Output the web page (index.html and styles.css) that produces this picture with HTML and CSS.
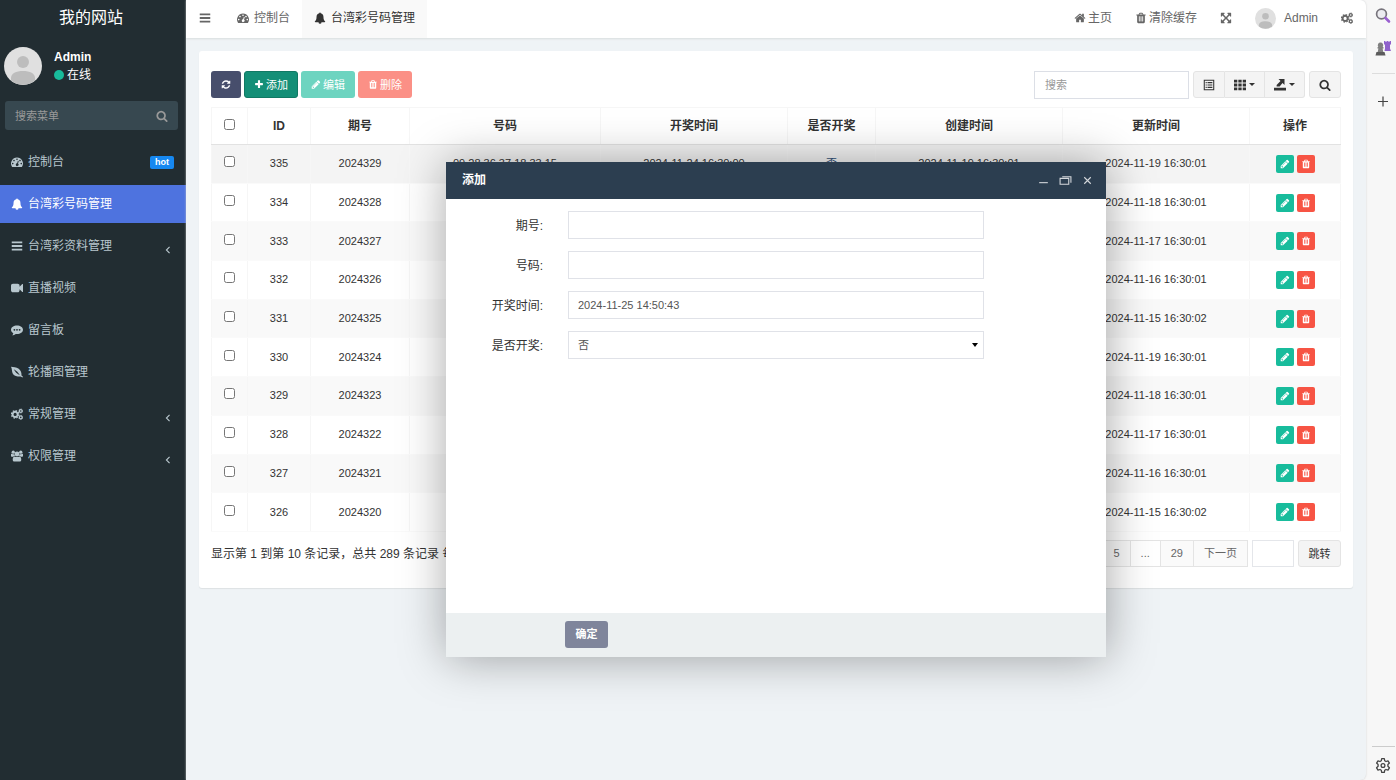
FILE: index.html
```html
<!DOCTYPE html>
<html lang="zh-CN">
<head>
  <meta charset="UTF-8">
  <meta name="viewport" content="width=device-width, initial-scale=1.0">
  <title>台湾彩号码管理</title>
  <link rel="stylesheet" href="styles.css">
</head>
<body>
<!-- icons -->
<svg class="sprite" aria-hidden="true">
  <symbol id="i-bars" viewBox="0 0 16 16"><path d="M1 2h14v2.400H1zM1 6.800h14v2.400H1zM1 11.600h14V14H1z"/></symbol>
  <symbol id="i-search" viewBox="0 0 1792 1792"><path d="M1216 832q0-185-131.500-316.500t-316.500-131.500-316.500 131.500-131.500 316.500 131.500 316.500 316.500 131.500 316.500-131.500 131.500-316.500zm512 832q0 52-38 90t-90 38q-54 0-90-38l-343-342q-179 124-399 124-143 0-273.500-55.500t-225-150-150-225-55.500-273.500 55.500-273.500 150-225 225-150 273.500-55.500 273.500 55.500 225 150 150 225 55.500 273.500q0 220-124 399l343 343q37 37 37 90z"/></symbol>
  <symbol id="i-plus" viewBox="0 0 1792 1792"><path d="M1600 736v192q0 40-28 68t-68 28h-416v416q0 40-28 68t-68 28h-192q-40 0-68-28t-28-68v-416h-416q-40 0-68-28t-28-68v-192q0-40 28-68t68-28h416v-416q0-40 28-68t68-28h192q40 0 68 28t28 68v416h416q40 0 68 28t28 68z"/></symbol>
  <symbol id="i-pencil" viewBox="0 0 1792 1792"><path d="M491 1536l91-91-235-235-91 91v107h128v128h107zm523-928q0-22-22-22-10 0-17 7l-542 542q-7 7-7 17 0 22 22 22 10 0 17-7l542-542q7-7 7-17zm-54-192l416 416-832 832h-416v-416zm683 96q0 53-37 90l-166 166-416-416 166-165q36-38 90-38 53 0 91 38l235 234q37 39 37 91z"/></symbol>
  <symbol id="i-trash" viewBox="0 0 1792 1792"><path d="M704 1376v-704q0-14-9-23t-23-9h-64q-14 0-23 9t-9 23v704q0 14 9 23t23 9h64q14 0 23-9t9-23zm256 0v-704q0-14-9-23t-23-9h-64q-14 0-23 9t-9 23v704q0 14 9 23t23 9h64q14 0 23-9t9-23zm256 0v-704q0-14-9-23t-23-9h-64q-14 0-23 9t-9 23v704q0 14 9 23t23 9h64q14 0 23-9t9-23zm-544-992h448l-48-117q-7-9-17-11h-317q-10 2-17 11zm928 32v64q0 14-9 23t-23 9h-96v948q0 83-47 143.500t-113 60.500h-832q-66 0-113-58.500t-47-141.500v-952h-96q-14 0-23-9t-9-23v-64q0-14 9-23t23-9h309l70-167q15-37 54-63t79-26h320q40 0 79 26t54 63l70 167h309q14 0 23 9t9 23z"/></symbol>
  <symbol id="i-refresh" viewBox="0 0 1792 1792"><path d="M1639 1056q0 5-1 7-64 268-268 434.500t-478 166.500q-146 0-282.500-55t-243.500-157l-129 129q-19 19-45 19t-45-19-19-45v-448q0-26 19-45t45-19h448q26 0 45 19t19 45-19 45l-137 137q71 66 161 102t187 36q134 0 250-65t186-179q11-17 53-117 8-23 30-23h192q13 0 22.500 9.500t9.500 22.500zm25-800v448q0 26-19 45t-45 19h-448q-26 0-45-19t-19-45 19-45l138-138q-148-137-349-137-134 0-250 65t-186 179q-11 17-53 117-8 23-30 23h-199q-13 0-22.500-9.500t-9.500-22.500v-7q65-268 270-434.500t480-166.500q146 0 284 55.500t245 156.500l130-129q19-19 45-19t45 19 19 45z"/></symbol>
  <symbol id="i-home" viewBox="0 0 1792 1792"><path d="M1472 992v480q0 26-19 45t-45 19h-384v-384h-256v384h-384q-26 0-45-19t-19-45v-480q0-1 .5-3t.5-3l575-474 575 474q1 2 1 6zm223-69l-62 74q-8 9-21 11h-3q-13 0-21-7l-692-577-692 577q-12 8-24 7-13-2-21-11l-62-74q-8-10-7-23.500t11-21.500l719-599q32-26 76-26t76 26l244 204v-195q0-14 9-23t23-9h192q14 0 23 9t9 23v408l219 182q10 8 11 21.500t-7 23.500z"/></symbol>
  <symbol id="i-video" viewBox="0 0 1792 1792"><path d="M1792 352v1088q0 42-39 59-13 5-25 5-27 0-45-19l-403-403v166q0 119-84.500 203.500t-203.500 84.500h-704q-119 0-203.500-84.500t-84.500-203.500v-704q0-119 84.500-203.500t203.500-84.500h704q119 0 203.500 84.500t84.500 203.500v165l403-402q18-19 45-19 12 0 25 5 39 17 39 59z"/></symbol>
  <symbol id="i-expand" viewBox="0 0 1792 1792"><path d="M1411 541l-355 355 355 355 144-144q29-31 70-14 39 17 39 59v448q0 26-19 45t-45 19h-448q-42 0-59-40-17-39 14-69l144-144-355-355-355 355 144 144q31 30 14 69-17 40-59 40h-448q-26 0-45-19t-19-45v-448q0-42 40-59 39-17 69 14l144 144 355-355-355-355-144 144q-19 19-45 19-12 0-24-5-40-17-40-59v-448q0-26 19-45t45-19h448q42 0 59 40 17 39-14 69l-144 144 355 355 355-355-144-144q-31-30-14-69 17-40 59-40h448q26 0 45 19t19 45v448q0 42-39 59-13 5-25 5-26 0-45-19z"/></symbol>
  <symbol id="i-dash" viewBox="0 0 16 16"><path fill-rule="evenodd" d="M8 2a8 8 0 0 0-6.700 12.300q.3.500.8.500h11.800q.5 0 .8-.5A8 8 0 0 0 8 2zM2.300 9a1.100 1.100 0 1 0 0 2.200 1.100 1.100 0 0 0 0-2.200zM4 5a1.100 1.100 0 1 0 0 2.200A1.100 1.100 0 0 0 4 5zM8 3.200a1.100 1.100 0 1 0 0 2.200 1.100 1.100 0 0 0 0-2.200zM12 5a1.100 1.100 0 1 0 0 2.200A1.100 1.100 0 0 0 12 5zM13.700 9a1.100 1.100 0 1 0 0 2.200 1.100 1.100 0 0 0 0-2.200zM9.200 6.300l-1 3.500a1.800 1.800 0 1 0 1.200.4l.9-3.600z"/></symbol>
  <symbol id="i-bell" viewBox="0 0 16 16"><path d="M8 .5c.7 0 1 .5 1 1.200 2.300.5 3.600 2.300 3.600 4.600 0 3.500.9 5 2.400 6.200 0 .6-.4 1-1 1H10a2 2 0 0 1-4 0H2c-.6 0-1-.4-1-1 1.500-1.200 2.400-2.700 2.400-6.200C3.400 4 4.700 2.200 7 1.700 7 1 7.300.5 8 .5z"/></symbol>
  <symbol id="i-comment" viewBox="0 0 16 16"><path fill-rule="evenodd" d="M8 2c4.400 0 8 2.500 8 5.700s-3.600 5.700-8 5.700l-1.600-.1C5 14.500 3.200 15 1.500 15c.9-.8 1.500-1.600 1.600-2.800C1.200 11.100 0 9.500 0 7.700 0 4.500 3.600 2 8 2zM4.500 6.500a1.200 1.200 0 1 0 0 2.400 1.200 1.200 0 0 0 0-2.400zm3.500 0a1.200 1.200 0 1 0 0 2.400 1.200 1.200 0 0 0 0-2.400zm3.500 0a1.200 1.200 0 1 0 0 2.400 1.200 1.200 0 0 0 0-2.400z"/></symbol>
  <symbol id="i-leaf" viewBox="0 0 16 16"><path fill-rule="evenodd" d="M0 1c3 .6 7 .2 10.300 2.600 3 2.300 3.900 5.400 3.700 8.900l2 1.800-.7 1-2.600-1.400C8.500 14 4.600 13.500 2.600 10.500.9 7.800 1.700 4 0 1zm3.800 3.200C5.300 7.500 8 10.300 11.800 12.400 10 8.700 7.200 6.300 3.800 4.200z"/></symbol>
  <symbol id="i-cogs" viewBox="0 0 16 16"><g fill="none" stroke="currentColor"><circle cx="5.500" cy="8.500" r="3.400" stroke-width="2.600"/><circle cx="5.500" cy="8.500" r="4.900" stroke-width="1.800" stroke-dasharray="2.100 1.750"/><circle cx="13" cy="4" r="1.900" stroke-width="1.700"/><circle cx="13" cy="4" r="2.800" stroke-width=".9" stroke-dasharray="1.500 1.430"/><circle cx="13" cy="12.500" r="1.900" stroke-width="1.700"/><circle cx="13" cy="12.500" r="2.800" stroke-width=".9" stroke-dasharray="1.500 1.430"/></g></symbol>
  <symbol id="i-users" viewBox="0 0 16 16"><circle cx="3" cy="2.900" r="2.200"/><circle cx="13" cy="2.900" r="2.200"/><circle cx="8" cy="5.300" r="3.200"/><path d="M0 5.500c.5-.7 1-.5 1.800-.1.900.4 1.700.3 2.600 0C4.500 6.600 5 7.300 5.400 8 4 8 3.300 8.400 2.700 9H1.500C.5 9 0 8.400 0 7.500zM16 5.500c-.5-.7-1-.5-1.800-.1-.9.4-1.700.3-2.600 0-.1 1.200-.6 1.900-1 2.600 1.400 0 2.100.4 2.700 1h1.200c1 0 1.500-.6 1.500-1.500zM5 8.500c2 1.300 4 1.300 6 0 2 0 2.700 2 2.700 4.500 0 1.400-.8 2.400-2 2.400H4.300c-1.200 0-2-1-2-2.400C2.300 10.500 3 8.500 5 8.500z"/></symbol>
  <symbol id="i-angle" viewBox="0 0 16 16"><path d="M10.500 3L5.500 8l5 5" fill="none" stroke="currentColor" stroke-width="1.800"/></symbol>
  <symbol id="i-list" viewBox="0 0 16 16"><path d="M1.700 1.700h12.600v12.600H1.700z" fill="none" stroke="currentColor" stroke-width="1.400"/><path d="M3.500 4h1.500v1.500H3.500zM6 4h6.500v1.500H6zM3.500 7.200h1.500v1.500H3.500zM6 7.200h6.500v1.500H6zM3.500 10.400h1.500v1.500H3.500zM6 10.400h6.500v1.500H6z"/></symbol>
  <symbol id="i-grid" viewBox="0 0 16 16"><path d="M0 1h4.400v3.800H0zM5.800 1h4.400v3.800H5.800zM11.600 1H16v3.800h-4.400zM0 6.100h4.400v3.800H0zM5.800 6.100h4.400v3.800H5.800zM11.600 6.100H16v3.800h-4.400zM0 11.200h4.400V15H0zM5.800 11.200h4.400V15H5.800zM11.600 11.200H16V15h-4.400z"/></symbol>
  <symbol id="i-export" viewBox="0 0 16 16"><path d="M0 11.500h16v3.800H0zM6 0h8v8l-2.600-2.600L7.500 10H3.500v-2L8.700 2.700z"/></symbol>
  <symbol id="i-user" viewBox="0 0 38 38"><circle cx="19" cy="19" r="19" fill="#e0e0e0"/><circle cx="19" cy="15" r="6" fill="#bdbdbd"/><path d="M7 33.500V31c0-4.500 5-7 12-7s12 2.500 12 7v2.500a19 19 0 0 1-24 0z" fill="#bdbdbd"/></symbol>
</svg>

<aside class="sidebar">
  <div class="logo">我的网站</div>
  <div class="user-panel">
    <svg class="avatar"><use href="#i-user"/></svg>
    <div class="user-info">
      <strong>Admin</strong>
      <span class="status"><i class="dot"></i>在线</span>
    </div>
  </div>
  <form class="menu-search">
    <input type="text" placeholder="搜索菜单" aria-label="搜索菜单">
    <button type="button" aria-label="搜索"><svg class="icon"><use href="#i-search"/></svg></button>
  </form>
  <nav class="menu">
    <a href="#"><svg class="icon"><use href="#i-dash"/></svg>控制台<span class="badge">hot</span></a>
    <a href="#" class="active"><svg class="icon"><use href="#i-bell"/></svg>台湾彩号码管理</a>
    <a href="#"><svg class="icon"><use href="#i-bars"/></svg>台湾彩资料管理<svg class="arrow"><use href="#i-angle"/></svg></a>
    <a href="#"><svg class="icon"><use href="#i-video"/></svg>直播视频</a>
    <a href="#"><svg class="icon"><use href="#i-comment"/></svg>留言板</a>
    <a href="#"><svg class="icon"><use href="#i-leaf"/></svg>轮播图管理</a>
    <a href="#"><svg class="icon"><use href="#i-cogs"/></svg>常规管理<svg class="arrow"><use href="#i-angle"/></svg></a>
    <a href="#"><svg class="icon"><use href="#i-users"/></svg>权限管理<svg class="arrow"><use href="#i-angle"/></svg></a>
  </nav>
</aside>

<div class="main">
  <header class="navbar">
    <a href="#" class="toggle" aria-label="菜单"><svg class="icon"><use href="#i-bars"/></svg></a>
    <a href="#" class="tab"><svg class="icon"><use href="#i-dash"/></svg>控制台</a>
    <a href="#" class="tab current"><svg class="icon"><use href="#i-bell"/></svg>台湾彩号码管理</a>
    <div class="nav-right">
      <a href="#"><svg class="icon"><use href="#i-home"/></svg>主页</a>
      <a href="#"><svg class="icon"><use href="#i-trash"/></svg>清除缓存</a>
      <a href="#" aria-label="全屏"><svg class="icon"><use href="#i-expand"/></svg></a>
      <a href="#" class="account"><svg class="avatar-sm"><use href="#i-user"/></svg>Admin</a>
      <a href="#" aria-label="设置"><svg class="icon"><use href="#i-cogs"/></svg></a>
    </div>
  </header>

  <div class="content">
    <section class="panel">
      <div class="toolbar">
        <button type="button" class="btn btn-primary" aria-label="刷新"><svg class="icon"><use href="#i-refresh"/></svg></button>
        <button type="button" class="btn btn-add"><svg class="icon"><use href="#i-plus"/></svg>添加</button>
        <button type="button" class="btn btn-edit"><svg class="icon"><use href="#i-pencil"/></svg>编辑</button>
        <button type="button" class="btn btn-del"><svg class="icon"><use href="#i-trash"/></svg>删除</button>
        <div class="tools">
          <input type="text" class="search" placeholder="搜索" aria-label="搜索">
          <div class="btn-group">
            <button type="button" class="btn btn-default" aria-label="切换"><svg class="icon"><use href="#i-list"/></svg></button>
            <button type="button" class="btn btn-default wide" aria-label="列"><svg class="icon"><use href="#i-grid"/></svg><i class="caret"></i></button>
            <button type="button" class="btn btn-default wide" aria-label="导出"><svg class="icon"><use href="#i-export"/></svg><i class="caret"></i></button>
          </div>
          <button type="button" class="btn btn-default" aria-label="普通搜索"><svg class="icon"><use href="#i-search"/></svg></button>
        </div>
      </div>

      <table class="table">
        <colgroup>
          <col class="c-check"><col class="c-id"><col class="c-no"><col class="c-code"><col class="c-time"><col class="c-open"><col class="c-time"><col class="c-time"><col class="c-op">
        </colgroup>
        <thead>
          <tr><th><input type="checkbox" aria-label="全选"></th><th>ID</th><th>期号</th><th>号码</th><th>开奖时间</th><th>是否开奖</th><th>创建时间</th><th>更新时间</th><th>操作</th></tr>
        </thead>
        <tbody>
          <tr class="hover"><td><input type="checkbox" aria-label="335"></td><td>335</td><td>2024329</td><td>09,28,36,37,18,33,15</td><td>2024-11-24 16:30:00</td><td><a href="#">否</a></td><td>2024-11-19 16:30:01</td><td>2024-11-19 16:30:01</td><td class="ops"><button type="button" class="op edit" aria-label="编辑"><svg class="icon"><use href="#i-pencil"/></svg></button><button type="button" class="op del" aria-label="删除"><svg class="icon"><use href="#i-trash"/></svg></button></td></tr>
          <tr><td><input type="checkbox" aria-label="334"></td><td>334</td><td>2024328</td><td></td><td></td><td></td><td></td><td>2024-11-18 16:30:01</td><td class="ops"><button type="button" class="op edit" aria-label="编辑"><svg class="icon"><use href="#i-pencil"/></svg></button><button type="button" class="op del" aria-label="删除"><svg class="icon"><use href="#i-trash"/></svg></button></td></tr>
          <tr><td><input type="checkbox" aria-label="333"></td><td>333</td><td>2024327</td><td></td><td></td><td></td><td></td><td>2024-11-17 16:30:01</td><td class="ops"><button type="button" class="op edit" aria-label="编辑"><svg class="icon"><use href="#i-pencil"/></svg></button><button type="button" class="op del" aria-label="删除"><svg class="icon"><use href="#i-trash"/></svg></button></td></tr>
          <tr><td><input type="checkbox" aria-label="332"></td><td>332</td><td>2024326</td><td></td><td></td><td></td><td></td><td>2024-11-16 16:30:01</td><td class="ops"><button type="button" class="op edit" aria-label="编辑"><svg class="icon"><use href="#i-pencil"/></svg></button><button type="button" class="op del" aria-label="删除"><svg class="icon"><use href="#i-trash"/></svg></button></td></tr>
          <tr><td><input type="checkbox" aria-label="331"></td><td>331</td><td>2024325</td><td></td><td></td><td></td><td></td><td>2024-11-15 16:30:02</td><td class="ops"><button type="button" class="op edit" aria-label="编辑"><svg class="icon"><use href="#i-pencil"/></svg></button><button type="button" class="op del" aria-label="删除"><svg class="icon"><use href="#i-trash"/></svg></button></td></tr>
          <tr><td><input type="checkbox" aria-label="330"></td><td>330</td><td>2024324</td><td></td><td></td><td></td><td></td><td>2024-11-19 16:30:01</td><td class="ops"><button type="button" class="op edit" aria-label="编辑"><svg class="icon"><use href="#i-pencil"/></svg></button><button type="button" class="op del" aria-label="删除"><svg class="icon"><use href="#i-trash"/></svg></button></td></tr>
          <tr><td><input type="checkbox" aria-label="329"></td><td>329</td><td>2024323</td><td></td><td></td><td></td><td></td><td>2024-11-18 16:30:01</td><td class="ops"><button type="button" class="op edit" aria-label="编辑"><svg class="icon"><use href="#i-pencil"/></svg></button><button type="button" class="op del" aria-label="删除"><svg class="icon"><use href="#i-trash"/></svg></button></td></tr>
          <tr><td><input type="checkbox" aria-label="328"></td><td>328</td><td>2024322</td><td></td><td></td><td></td><td></td><td>2024-11-17 16:30:01</td><td class="ops"><button type="button" class="op edit" aria-label="编辑"><svg class="icon"><use href="#i-pencil"/></svg></button><button type="button" class="op del" aria-label="删除"><svg class="icon"><use href="#i-trash"/></svg></button></td></tr>
          <tr><td><input type="checkbox" aria-label="327"></td><td>327</td><td>2024321</td><td></td><td></td><td></td><td></td><td>2024-11-16 16:30:01</td><td class="ops"><button type="button" class="op edit" aria-label="编辑"><svg class="icon"><use href="#i-pencil"/></svg></button><button type="button" class="op del" aria-label="删除"><svg class="icon"><use href="#i-trash"/></svg></button></td></tr>
          <tr><td><input type="checkbox" aria-label="326"></td><td>326</td><td>2024320</td><td></td><td></td><td></td><td></td><td>2024-11-15 16:30:02</td><td class="ops"><button type="button" class="op edit" aria-label="编辑"><svg class="icon"><use href="#i-pencil"/></svg></button><button type="button" class="op del" aria-label="删除"><svg class="icon"><use href="#i-trash"/></svg></button></td></tr>
        </tbody>
      </table>

      <div class="table-foot">
        <span class="summary">显示第 1 到第 10 条记录，总共 289 条记录 每</span>
        <div class="pages">
          <a href="#">5</a><span>...</span><a href="#">29</a><a href="#">下一页</a>
        </div>
        <input type="text" class="jump" aria-label="页码">
        <button type="button" class="btn btn-default btn-jump">跳转</button>
      </div>
    </section>

    <!-- add dialog -->
    <div class="dialog-wrap">
      <div class="dialog" role="dialog" aria-labelledby="dialog-title">
        <div class="dialog-head">
          <span id="dialog-title">添加</span>
          <div class="win-btns">
            <button type="button" aria-label="最小化"><svg viewBox="0 0 12 12"><path d="M2 8h8"/></svg></button>
            <button type="button" aria-label="最大化"><svg viewBox="0 0 12 12"><path d="M1 4h8v5.500H1zM3 2.500h8v5.500"/></svg></button>
            <button type="button" aria-label="关闭"><svg viewBox="0 0 12 12"><path d="M3 3l6 6M9 3l-6 6"/></svg></button>
          </div>
        </div>
        <form class="dialog-body">
          <label for="issue">期号:</label><input type="text" id="issue">
          <label for="code">号码:</label><input type="text" id="code">
          <label for="opentime">开奖时间:</label><input type="text" id="opentime" value="2024-11-25 14:50:43">
          <label for="isopen">是否开奖:</label>
          <div class="select">
            <select id="isopen"><option>否</option><option>是</option></select>
            <i class="caret"></i>
          </div>
        </form>
        <div class="dialog-foot">
          <button type="button" class="btn btn-ok">确定</button>
        </div>
      </div>
    </div>
  </div>
</div>

<aside class="rail">
  <button type="button" aria-label="搜索"><svg viewBox="0 0 16 16"><circle cx="6.500" cy="6.500" r="4.900" fill="#ececf0" stroke="#77747c" stroke-width="1.700"/><path d="M10.500 10.500l3.500 3.500" stroke="#9a5fd0" stroke-width="2.600" stroke-linecap="round"/></svg></button>
  <button type="button" aria-label="游戏"><svg viewBox="0 0 16 16"><path fill="#8f62cc" d="M9 .5h1.500v1h1v-1h2v1h1v-1H16v3l-1 1v3.500l1 2.500H9.500L10 8V4.500l-1-1z"/><path fill="#808080" d="M5.500 2a2.700 2.700 0 0 1 2.200 4.300l.8.400v1.300H7.600l.8 4h-5.800l.8-4H2.500V6.700l.8-.4A2.700 2.700 0 0 1 5.500 2z"/><path fill="#5c5c5c" d="M1.500 11.500h8L10.500 15H.5z"/></svg></button>
  <hr>
  <button type="button" class="rail-add" aria-label="添加"><svg viewBox="0 0 16 16"><path d="M8 3v10M3 8h10" stroke="#444" stroke-width="1.200"/></svg></button>
  <hr class="last">
  <button type="button" aria-label="设置"><svg viewBox="0 0 16 16" fill="none" stroke="#444" stroke-width="1.300" stroke-linejoin="round"><path d="M6.700 1.200h2.600l.4 2 1.300.8 2-.7 1.400 2.300L12.900 7v1.800l1.500 1.500-1.400 2.300-2-.6-1.300.8-.4 2H6.700l-.4-2-1.300-.8-2 .6-1.400-2.300L3.100 8.800V7L1.600 5.600 3 3.300l2 .7 1.300-.8z"/><circle cx="8" cy="8" r="1.900"/></svg></button>
</aside>
</body>
</html>
```
FILE: styles.css
```css
*{
  box-sizing: border-box;
}
body{
  margin: 0;
  min-height: 100vh;
  display: flex;
  background-color: #f7f7f7;
  color: #333;
  font: 12px/18px "Liberation Sans", "Noto Sans CJK SC", sans-serif;
}
a{
  color: inherit;
  text-decoration: none;
}
button, input, select{
  font: inherit;
  color: inherit;
  margin: 0;
}
button{
  padding: 0;
  border: 0;
  background: none;
}
.sprite{
  position: absolute;
  width: 0;
  height: 0;
}
.icon{
  width: 12px;
  height: 12px;
  fill: currentColor;
  flex: none;
}
.caret{
  border: 3px solid transparent;
  border-top-color: currentColor;
  border-bottom: 0;
}

/* sidebar */
.sidebar{
  width: 186px;
  flex: none;
  background-color: #222d32;
  color: #b8c7ce;
}
.logo{
  height: 38px;
  padding-right: 4px;
  line-height: 35px;
  font-size: 16px;
  text-align: center;
  color: #fff;
}
.user-panel{
  display: flex;
  align-items: center;
  gap: 12px;
  height: 56px;
  padding-left: 4px;
  color: #fff;
}
.avatar{
  width: 38px;
  height: 38px;
}
.user-info{
  display: flex;
  flex-direction: column;
}
.status{
  display: flex;
  align-items: center;
  gap: 3px;
}
.dot{
  width: 10px;
  height: 10px;
  border-radius: 50%;
  background-color: #18bc9c;
}
.menu-search{
  display: flex;
  align-items: center;
  height: 29px;
  margin: 7px 8px 13px 5px;
  padding: 0 10px;
  border-radius: 3px;
  background-color: #374850;
  font-size: 11px;
}
.menu-search input{
  flex: 1;
  min-width: 0;
  padding: 0;
  border: 0;
  background: none;
  outline: 0;
}
.menu-search input::placeholder{
  color: #999;
}
.menu-search button{
  display: flex;
  color: #999;
}
.menu{
  display: flex;
  flex-direction: column;
  gap: 4px;
}
.menu a{
  display: flex;
  align-items: center;
  gap: 5px;
  height: 38px;
  padding: 0 12px 0 11px;
}
.menu a.active{
  background-color: #4e73df;
  color: #fff;
}
.badge{
  margin-left: auto;
  padding: 0 5px;
  border-radius: 2px;
  background-color: #1688f1;
  color: #fff;
  font-size: 9px;
  font-weight: bold;
  line-height: 13px;
}
.arrow{
  width: 10px;
  height: 10px;
  margin: 8px 1px 0 auto;
}

/* main */
.main{
  flex: 1;
  min-width: 0;
  display: flex;
  flex-direction: column;
  border-radius: 0 6px 6px 0;
  overflow: hidden;
  background-color: #eff3f6;
  box-shadow: 0 0 2px #ccc;
}
.navbar{
  display: flex;
  height: 38px;
  padding: 0 13px;
  background-color: #fff;
  color: #666;
  box-shadow: 0 1px 2px #d8dede;
  z-index: 1;
}
.navbar a{
  display: flex;
  align-items: center;
  gap: 5px;
  padding-bottom: 2px;
}
.navbar .toggle{
  padding-right: 14px;
}
.navbar .tab{
  padding: 0 12px 2px;
}
.navbar .current{
  background-color: #f9f9f9;
  color: #333;
}
.nav-right{
  display: flex;
  gap: 23px;
  margin-left: auto;
}
.navbar .nav-right a{
  gap: 2px;
}
.navbar .nav-right .account{
  gap: 8px;
}
.avatar-sm{
  width: 21px;
  height: 21px;
}
.content{
  position: relative;
  flex: 1;
  padding: 13px;
}
.panel{
  padding: 20px 12px 21px;
  border-radius: 3px;
  background-color: #fff;
  box-shadow: 0 1px 1px #dde1e4;
}
.toolbar{
  display: flex;
  gap: 3px;
  margin-bottom: 8px;
}
.btn{
  display: flex;
  align-items: center;
  justify-content: center;
  gap: 2px;
  height: 27px;
  padding: 0 10px;
  border-radius: 3px;
  color: #fff;
  font-size: 11px;
  white-space: nowrap;
}
.toolbar > .btn .icon{
  width: 10px;
  height: 11px;
}
.btn-primary{
  background-color: #474e6c;
}
.btn-add{
  padding: 0 9px;
  background-color: #148f77;
  border: 1px solid #117964;
}
.btn-edit{
  background-color: #6dd4c0;
}
.btn-del{
  background-color: #fb9086;
}
.btn-default{
  width: 32px;
  padding: 0;
  border: 1px solid #e4e4e4;
  background-color: #f4f4f4;
  color: #333;
}
.tools{
  display: flex;
  gap: 4px;
  margin-left: auto;
}
.search{
  width: 155px;
  height: 28px;
  padding: 0 10px;
  border: 1px solid #dcdfe6;
  font-size: 11px;
}
.search::placeholder{
  color: #999;
}
.btn-group{
  display: flex;
}
.btn-group .btn{
  border-radius: 0;
}
.btn-group .btn + .btn{
  border-left: 0;
}
.btn-group .btn:first-child{
  border-radius: 3px 0 0 3px;
}
.btn-group .btn:last-child{
  border-radius: 0 3px 3px 0;
}
.btn-group .wide{
  width: 40px;
  gap: 3px;
}

/* table */
.table{
  width: 100%;
  height: 425px;
  table-layout: fixed;
  border-collapse: collapse;
  text-align: center;
}
.c-check{ width: 36px; }
.c-id{ width: 63px; }
.c-no{ width: 99px; }
.c-code{ width: 191px; }
.c-time{ width: 187px; }
.c-open{ width: 88px; }
.c-op{ width: 91px; }
.table th, .table td{
  padding: 0;
  border: 1px solid #f6f6f6;
}
.table th{
  height: 37px;
  border-bottom-color: #e2e2e2;
}
.table td{
  height: 38px;
  padding-bottom: 1px;
  border-top-color: #fafafa;
  border-bottom-color: #fafafa;
  font-size: 11px;
}
.table tbody tr:nth-child(odd){
  background-color: #f9f9f9;
}
.table tbody tr.hover{
  background-color: #f4f4f4;
}
.table td a{
  color: #34527a;
}
.table input{
  width: 11px;
  height: 11px;
}
.op{
  width: 18px;
  height: 18px;
  border-radius: 2px;
  color: #fff;
  vertical-align: middle;
}
.op + .op{
  margin-left: 3px;
}
.op .icon{
  display: block;
  width: 10px;
  height: 10px;
  margin: auto;
}
.edit{
  background-color: #18bc9c;
}
.del{
  background-color: #f75444;
}
.table-foot{
  display: flex;
  align-items: center;
  gap: 4px;
  margin-top: 8px;
}
.pages{
  display: flex;
  margin-left: auto;
  border: 1px solid #e4e4e4;
  color: #666;
  font-size: 11px;
}
.pages a, .pages span{
  padding: 0 10px;
  line-height: 25px;
  background-color: #fafafa;
}
.pages span{
  background-color: #fff;
}
.pages > * + *{
  border-left: 1px solid #e4e4e4;
}
.jump{
  width: 42px;
  height: 27px;
  border: 1px solid #e4e6ea;
}
.btn-jump{
  width: 43px;
}

/* dialog */
.dialog-wrap{
  position: absolute;
  inset: 0;
  display: flex;
  align-items: center;
  justify-content: center;
}
.dialog{
  width: 660px;
  background-color: #fff;
  box-shadow: 1px 1px 44px rgba(0, 0, 0, .35);
}
.dialog-head{
  display: flex;
  align-items: center;
  justify-content: space-between;
  height: 37px;
  padding: 0 12px 0 16px;
  background-color: #2c3e50;
  color: #fff;
  font-weight: bold;
}
.win-btns{
  display: flex;
  gap: 9px;
}
.win-btns button{
  display: flex;
}
.win-btns svg{
  width: 13px;
  height: 13px;
  fill: none;
  stroke: #d5d8dc;
}
.dialog-body{
  display: grid;
  grid-template-columns: 97fr 416fr 97fr;
  align-content: start;
  align-items: center;
  gap: 12px 25px;
  height: 414px;
  padding-top: 12px;
}
.dialog-body label{
  grid-column: 1;
  padding-top: 2px;
  text-align: right;
}
.dialog-body input, .dialog-body select{
  width: 100%;
  height: 28px;
  padding: 0 9px;
  border: 1px solid #e0e2e8;
  border-radius: 0;
  background-color: #fff;
  color: #555;
  font-size: 11px;
}
.select{
  position: relative;
}
.dialog-body select{
  display: block;
  appearance: none;
}
.select .caret{
  position: absolute;
  right: 6px;
  top: 12px;
  color: #000;
  border-width: 4px 3px 0;
}
.dialog-foot{
  height: 44px;
  padding: 8px 119px;
  background-color: #ecf0f1;
}
.btn-ok{
  width: 43px;
  background-color: #7f859b;
  font-weight: bold;
}

/* right rail */
.rail{
  display: flex;
  flex-direction: column;
  align-items: center;
  gap: 16px;
  width: 30px;
  flex: none;
  padding: 7px 0 6px 4px;
}
.rail button{
  display: flex;
}
.rail svg{
  width: 16px;
  height: 17px;
}
.rail hr{
  width: 23px;
  margin: 0;
  border: 0;
  border-top: 1px solid #ddd;
}
.rail .rail-add{
  padding-top: 3px;
}
.rail .last{
  margin-top: auto;
  margin-bottom: -6px;
  border-top-color: #ccc;
}
```
